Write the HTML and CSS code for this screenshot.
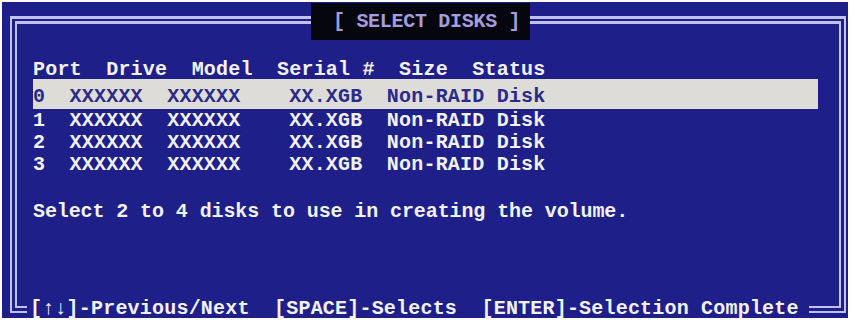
FILE: index.html
```html
<!DOCTYPE html>
<html>
<head>
<meta charset="utf-8">
<link rel="stylesheet" href="styles.css">
</head>
<body>
<div class="screen">
  <div class="title">[ SELECT DISKS ]</div>
  <div class="frame">
    <div class="content">
      <div class="header">Port  Drive  Model  Serial #  Size  Status</div>
      <div class="row selected">0  XXXXXX  XXXXXX    XX.XGB  Non-RAID Disk</div>
      <div class="row">1  XXXXXX  XXXXXX    XX.XGB  Non-RAID Disk</div>
      <div class="row">2  XXXXXX  XXXXXX    XX.XGB  Non-RAID Disk</div>
      <div class="row">3  XXXXXX  XXXXXX    XX.XGB  Non-RAID Disk</div>
      <div class="message">Select 2 to 4 disks to use in creating the volume.</div>
    </div>
    <div class="footer">[↑↓]-Previous/Next  [SPACE]-Selects  [ENTER]-Selection Complete</div>
  </div>
</div>
</body>
</html>
```
FILE: styles.css
```css
html, body {
  margin: 0;
  padding: 0;
  background: #ffffff;
}

body {
  font-family: "Liberation Mono", "DejaVu Sans Mono", monospace;
  font-weight: bold;
  font-size: 20px;
  color: #f2f2f6;
}

.screen {
  position: relative;
  margin: 2px 0 0 2px;
  width: 846px;
  height: 316px;
  background: #1f1f8a;
  padding-top: 14px;
  box-sizing: border-box;
}

.title {
  position: absolute;
  top: 1px;
  left: 309px;
  width: 219px;
  height: 37px;
  line-height: 38px;
  padding-left: 22px;
  box-sizing: border-box;
  background: #06060e;
  color: #a49cdc;
  white-space: pre;
  letter-spacing: -0.3px;
  z-index: 2;
}

.frame {
  position: relative;
  margin-left: 8px;
  width: 836px;
  height: 297px;
  box-sizing: border-box;
  border: 7px double #c0c0ec;
  border-top-width: 8px;
}

.content {
  padding: 37px 0 0 16px;
  letter-spacing: 0.2px;
}

.header {
  line-height: 18px;
  white-space: pre;
}

.row {
  line-height: 22px;
  white-space: pre;
}

.row.selected {
  width: 785px;
  padding-top: 6px;
  line-height: 24px;
  background: #dedcd6;
  color: #2a2a8c;
}

.row.selected + .row {
  margin-top: 1px;
}

.message {
  margin-top: 25px;
  line-height: 22px;
  letter-spacing: -0.1px;
  white-space: pre;
}

.footer {
  position: absolute;
  left: 10px;
  bottom: -14px;
  padding: 0 10px 0 3px;
  line-height: 22px;
  background: #1f1f8a;
  white-space: pre;
  letter-spacing: 0.2px;
}
```
